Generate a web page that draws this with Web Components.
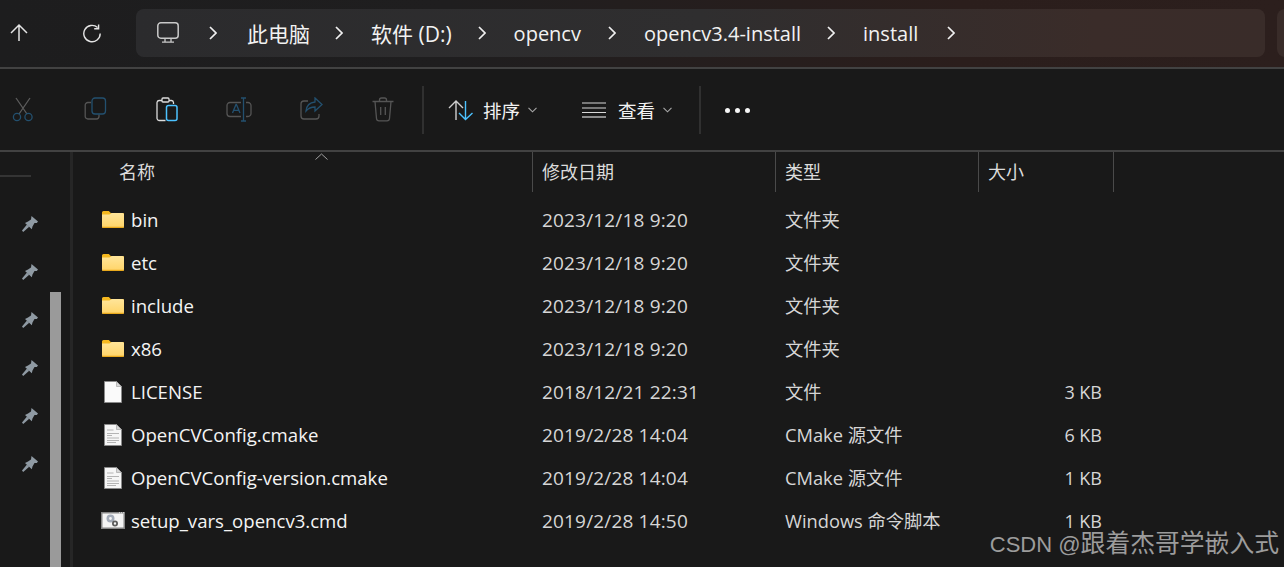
<!DOCTYPE html>
<html>
<head>
<meta charset="utf-8">
<title>install</title>
<style>
  html, body { margin: 0; height: 100%; background: #191919; overflow: hidden; }
  body { font-family: "Open Sans", "Noto Sans CJK SC", sans-serif; color: #fff; }
</style>
</head>
<body>
<fe-window>
  <fe-addressbar></fe-addressbar>
  <fe-toolbar></fe-toolbar>
  <fe-content></fe-content>
</fe-window>
<fe-watermark>CSDN @<span>跟着杰哥学嵌入式</span></fe-watermark>

<script>
const ICONS = {
  up: `<svg width="20" height="20" viewBox="0 0 20 20" fill="none" stroke="#e4e4e4" stroke-width="1.5"><path d="M10 18V2.500M2 10l8-8 8 8"/></svg>`,
  refresh: `<svg width="20" height="20" viewBox="0 0 20 20" fill="none" stroke="#e4e4e4" stroke-width="1.400"><path d="M15.600 4.600A8.200 8.200 0 1 0 18.200 10.500"/><path d="M16.600 1.400v4.400h-4.400"/></svg>`,
  pc: `<svg width="24" height="24" viewBox="0 0 24 24" fill="none" stroke="#c9c9c9" stroke-width="1.500"><rect x="1.800" y="1.800" width="20.400" height="15.400" rx="3"/><path d="M9 17.500v3.400M15 17.500v3.400M6 21.200h12" stroke-width="1.300"/></svg>`,
  chev: `<svg width="8" height="14" viewBox="0 0 8 14" fill="none" stroke="#f0f0f0" stroke-width="1.700"><path d="M1 1l6 6-6 6"/></svg>`,
  cut: `<svg width="22" height="26" viewBox="0 0 22 26" fill="none" stroke-width="1.300"><path d="M4 1l11 16M18 1L7 17" stroke="#5c5c5c"/><circle cx="5" cy="20" r="3.600" stroke="#23506f"/><circle cx="16.500" cy="20" r="3.600" stroke="#23506f"/></svg>`,
  copy: `<svg width="23" height="23" viewBox="0 0 23 23" fill="none" stroke-width="1.300"><path d="M7 5.500H4A2.600 2.600 0 0 0 1.200 8v11.500A2.600 2.600 0 0 0 4 22h8.500A2.600 2.600 0 0 0 15 19.500v-2" stroke="#555"/><rect x="8" y="1" width="13.500" height="16" rx="3" stroke="#23506f"/></svg>`,
  paste: `<svg width="22" height="25" viewBox="0 0 22 25" fill="none" stroke-width="1.300"><path d="M9.500 23.500H3A2.200 2.200 0 0 1 1 21.500V5.500A2.200 2.200 0 0 1 3 3.500h12.500A2.200 2.200 0 0 1 17.500 5.500V7" stroke="#dcdcdc"/><rect x="6" y="1" width="7" height="4" rx="1" stroke="#dcdcdc" fill="#191919"/><rect x="10.500" y="8.500" width="10.500" height="15" rx="2" stroke="#4cc2ff" stroke-width="1.500"/></svg>`,
  rename: `<svg width="26" height="25" viewBox="0 0 26 25" fill="none" stroke-width="1.300"><path d="M15 5.500H4A3 3 0 0 0 1 8.500v8a3 3 0 0 0 3 3h11M20 5.500h2a3 3 0 0 1 3 3v8a3 3 0 0 1-3 3h-2" stroke="#555"/><path d="M6.500 16l3.500-8.500h.4L14 16M7.700 13.300h5" stroke="#23506f"/><path d="M17.500 1v23M15 1h5M15 24h5" stroke="#23506f"/></svg>`,
  share: `<svg width="23" height="23" viewBox="0 0 23 23" fill="none" stroke-width="1.300"><path d="M8 4H4A3 3 0 0 0 1 7v12a3 3 0 0 0 3 3h12a3 3 0 0 0 3-3v-2" stroke="#555"/><path d="M15 1l7 6.500-7 6.500v-4c-4 0-6.500 1-9 4 .5-5 3.500-8.500 9-9z" stroke="#23506f"/></svg>`,
  trash: `<svg width="22" height="25" viewBox="0 0 22 25" fill="none" stroke="#555" stroke-width="1.300"><path d="M.5 4.500h21M7.500 4.500V3A2 2 0 0 1 9.500 1h3a2 2 0 0 1 2 2v1.500M3 4.500l1.500 17a2.500 2.500 0 0 0 2.500 2.300h8a2.500 2.500 0 0 0 2.500-2.300l1.500-17M8.700 10v8M13.300 10v8"/></svg>`,
  sort: `<svg width="26" height="21" viewBox="0 0 26 21" fill="none" stroke-width="1.400"><path d="M8 20V1.500M1 8l7-7 7 7" stroke="#cfcfcf"/><path d="M17.500 1v18.500M11 13l6.500 6.500L24.500 13" stroke="#4cc2ff"/></svg>`,
  view: `<svg width="24" height="16" viewBox="0 0 24 16" fill="none"><path d="M0 1h24M0 6h24M0 10.500h24" stroke="#d8d8d8" stroke-width="1.100"/><path d="M0 15h24" stroke="#9a9a9a" stroke-width="1.800"/></svg>`,
  caret: `<svg width="9" height="6" viewBox="0 0 9 6" fill="none" stroke="#a8a8a8" stroke-width="1.100"><path d="M.5 .8l4 4 4-4"/></svg>`,
  pin: `<svg width="16" height="16" viewBox="0 0 16 16" fill="#8f9aa3"><path d="M9.500 0L16 5.500 14.800 7 12.500 7 10.500 10.500 9.800 13.200 3 7 6 5.400 9 3.600z"/><path d="M5 8.500L0 14.500 1.200 16 7.200 10.800z"/></svg>`,
  folder: `<svg width="22" height="17" viewBox="0 0 22 17"><defs><linearGradient id="fg" x1="0" y1="0" x2="0" y2="1"><stop offset="0" stop-color="#ffe59a"/><stop offset="1" stop-color="#ffd467"/></linearGradient></defs><path d="M0 1.500A1.500 1.500 0 0 1 1.500 0h5.300L9 2.200h13V5H0z" fill="#f5b81f"/><path d="M0 3.500h7.500L9.700 2h10.800A1.500 1.500 0 0 1 22 3.500v12a1.500 1.500 0 0 1-1.500 1.500h-19A1.500 1.500 0 0 1 0 15.500z" fill="url(#fg)"/><path d="M0 15.800h22V15.500A1.500 1.500 0 0 1 20.500 17h-19A1.500 1.500 0 0 1 0 15.500z" fill="#e9a91c"/></svg>`,
  file: `<svg width="18" height="22" viewBox="0 0 18 22"><path d="M.5.500h12l5 5v16H.5z" fill="#fafafa" stroke="#8a8a8a"/><path d="M12.500.500v5h5z" fill="#d6d6d6" stroke="#9a9a9a" stroke-width=".6"/></svg>`,
  doc: `<svg width="18" height="22" viewBox="0 0 18 22"><path d="M.5.500h12l5 5v16H.5z" fill="#f6f6f6" stroke="#8a8a8a"/><path d="M12.500.500v5h5z" fill="#d6d6d6" stroke="#9a9a9a" stroke-width=".6"/><path d="M3 6h6.500M3 9.500h12M3 11.500h5M3 14h12M3 16.500h12M3 18.500h9" stroke="#b4b4b4" stroke-width="1.200"/></svg>`,
  cmd: `<svg width="24" height="17" viewBox="0 0 24 17"><rect x=".75" y=".75" width="22.500" height="15.500" fill="#f4f4f4" stroke="#858585" stroke-width="1.500"/><path d="M18 .8h5" stroke="#e8e8e8" stroke-dasharray="1 1"/><circle cx="9.500" cy="6.500" r="2.700" fill="none" stroke="#a3abb8" stroke-width="2.600"/><circle cx="14" cy="11.500" r="2.100" fill="none" stroke="#5c5c5c" stroke-width="1.800"/></svg>`
};

class FeWindow extends HTMLElement {
  constructor() {
    super();
    this.attachShadow({ mode: "open" }).innerHTML = `
      <style>
        :host { display: flex; flex-direction: column; height: 567px; width: 1284px; overflow: hidden; }
      </style>
      <slot></slot>`;
  }
}

class FeAddressbar extends HTMLElement {
  constructor() {
    super();
    const crumbs = ["此电脑", "软件 (D:)", "opencv", "opencv3.4-install", "install"];
    const items = crumbs.map((c, i) => `<span class="sep">${ICONS.chev}</span><span class="crumb c${i}">${c}</span>`).join("");
    this.attachShadow({ mode: "open" }).innerHTML = `
      <style>
        :host {
          display: flex; flex: none; height: 69px; box-sizing: border-box; padding-top: 9px;
          background: linear-gradient(90deg, #1d1d1e 0%, #1f1e1f 35%, #2b1e1c 75%, #2c1f1d 100%);
          border-bottom: 2px solid #424242;
        }
        .nav { flex: none; width: 136px; display: flex; align-items: center; height: 48px; }
        .nav span { display: flex; }
        .nav span:first-child { margin-left: 9px; }
        .nav span:last-child { margin-left: 53px; }
        .path {
          width: 1129px; height: 48px; flex: none; box-sizing: border-box; padding-left: 20px; border-radius: 8px;
          display: flex; align-items: center;
          background: linear-gradient(90deg, #2b2b2d 0%, #2f2e2f 50%, #3a2c29 85%, #392c29 100%);
          font-size: 20px; color: #f2f2f2; white-space: nowrap;
        }
        .pc { display: flex; margin-right: 29px; }
        .sep { display: flex; }
        .crumb { margin: 0 27px 0 28px; }
        .c0 { margin-left: 30px; margin-right: 25px; font-size: 21px; }
        .c1 { font-size: 21px; margin-right: 26px; }
        .c3 { margin-right: 26px; }
        .c4 { margin-right: 29px; }
        .end { display: flex; }
        .rest {
          flex: none; width: 20px; height: 48px; margin-left: 12px; border-radius: 8px 0 0 8px; background: #392c29;
        }
      </style>
      <div class="nav"><span>${ICONS.up}</span><span>${ICONS.refresh}</span></div>
      <div class="path"><span class="pc">${ICONS.pc}</span>${items}<span class="end">${ICONS.chev}</span></div>
      <div class="rest"></div>`;
  }
}

class FeToolbar extends HTMLElement {
  constructor() {
    super();
    const btns = ["cut", "copy", "paste", "rename", "share", "trash"]
      .map((n) => `<span class="ic">${ICONS[n]}</span>`).join("");
    this.attachShadow({ mode: "open" }).innerHTML = `
      <style>
        :host {
          display: flex; flex: none; height: 83px; box-sizing: border-box; align-items: center;
          background: #191919; border-bottom: 2px solid #424242; padding-top: 1px;
          font-size: 18.500px; color: #f2f2f2;
        }
        .ic { display: flex; justify-content: center; width: 72px; flex: none; }
        .icons { display: flex; margin-left: -13px; width: 435px; flex: none; }
        .div { width: 2px; height: 48px; background: #303030; flex: none; }
        .menu { display: flex; align-items: center; flex: none; }
        .menu svg { display: block; }
        .label { margin-left: 9px; margin-right: 8px; }
        .sort { margin-left: 24px; }
        .view { margin-left: 45px; }
        .more { margin-left: 24px; display: flex; gap: 5px; }
        .more i { display: block; width: 5px; height: 5px; border-radius: 50%; background: #f5f5f5; }
      </style>
      <div class="icons">${btns}</div>
      <div class="div"></div>
      <div class="menu sort">${ICONS.sort}<span class="label">排序</span>${ICONS.caret}</div>
      <div class="menu view">${ICONS.view}<span class="label" style="margin-left:12px">查看</span>${ICONS.caret}</div>
      <div class="div" style="margin-left:27px"></div>
      <div class="more"><i></i><i></i><i></i></div>`;
  }
}

class FeContent extends HTMLElement {
  constructor() {
    super();
    this.attachShadow({ mode: "open" }).innerHTML = `
      <style>
        :host { display: flex; flex: 1; min-height: 0; background: #191919; }
        .right { flex: 1; min-width: 0; display: flex; flex-direction: column; }
      </style>
      <fe-navpane></fe-navpane>
      <div class="right">
        <fe-header></fe-header>
        <fe-row icon="folder" name="bin" date="2023/12/18 9:20" kind="文件夹"></fe-row>
        <fe-row icon="folder" name="etc" date="2023/12/18 9:20" kind="文件夹"></fe-row>
        <fe-row icon="folder" name="include" date="2023/12/18 9:20" kind="文件夹"></fe-row>
        <fe-row icon="folder" name="x86" date="2023/12/18 9:20" kind="文件夹"></fe-row>
        <fe-row icon="file" name="LICENSE" date="2018/12/21 22:31" kind="文件" size="3 KB"></fe-row>
        <fe-row icon="doc" name="OpenCVConfig.cmake" date="2019/2/28 14:04" kind="CMake 源文件" size="6 KB"></fe-row>
        <fe-row icon="doc" name="OpenCVConfig-version.cmake" date="2019/2/28 14:04" kind="CMake 源文件" size="1 KB"></fe-row>
        <fe-row icon="cmd" name="setup_vars_opencv3.cmd" date="2019/2/28 14:50" kind="Windows 命令脚本" size="1 KB"></fe-row>
      </div>`;
  }
}

class FeNavpane extends HTMLElement {
  constructor() {
    super();
    const pins = Array.from({ length: 6 }, () => `<span>${ICONS.pin}</span>`).join("");
    this.attachShadow({ mode: "open" }).innerHTML = `
      <style>
        :host {
          display: flex; flex: none; width: 73px; box-sizing: border-box; position: relative;
          border-right: 3px solid #262626;
        }
        .col { width: 50px; flex: none; }
        .rule { width: 31px; height: 2px; background: #343434; margin-top: 23px; }
        .pins { display: flex; flex-direction: column; gap: 32px; margin: 39px 0 0 22px; }
        .pins span { display: flex; height: 16px; }
        .bar { width: 11px; background: #9a9a9a; margin-top: 140px; flex: none; }
      </style>
      <div class="col"><div class="rule"></div><div class="pins">${pins}</div></div>
      <div class="bar"></div>`;
  }
}

class FeHeader extends HTMLElement {
  constructor() {
    super();
    this.attachShadow({ mode: "open" }).innerHTML = `
      <style>
        :host { display: block; flex: none; height: 46px; position: relative; font-size: 18px; color: #dcdcdc; }
        .cols { display: grid; grid-template-columns: 460px 243px 203px 135px; height: 40px; }
        .cols div { padding-left: 9px; border-right: 1px solid #4a4a4a; line-height: 40px; box-sizing: border-box; }
        .cols div:first-child { padding-left: 46px; }
        .sort { position: absolute; left: 242px; top: 1px; display: block; }
      </style>
      <div class="cols"><div>名称</div><div>修改日期</div><div>类型</div><div>大小</div></div>
      <svg class="sort" width="13" height="7" viewBox="0 0 13 7" fill="none" stroke="#a0a0a0"><path d="M.5 6.500l6-5.500 6 5.500"/></svg>`;
  }
}

class FeRow extends HTMLElement {
  constructor() {
    super();
    const a = (k) => this.getAttribute(k) || "";
    this.attachShadow({ mode: "open" }).innerHTML = `
      <style>
        :host {
          display: grid; grid-template-columns: 460px 243px 203px 123px; flex: none; height: 43px; align-items: center;
          font-size: 18.600px; color: #f4f4f4; white-space: nowrap;
        }
        .name { display: flex; align-items: center; padding-left: 28px; }
        .ico { width: 24px; display: flex; justify-content: center; margin-right: 6px; flex: none; }
        .date, .kind { padding-left: 9px; color: #d6d6d6; }
        .date { font-size: 19px; letter-spacing: .17px; }
        .kind { font-size: 18.300px; margin-top: -2px; }
        .size { text-align: right; color: #d6d6d6; font-size: 18px; }
      </style>
      <div class="name"><span class="ico">${ICONS[a("icon")]}</span>${a("name")}</div>
      <div class="date">${a("date")}</div>
      <div class="kind">${a("kind")}</div>
      <div class="size">${a("size")}</div>`;
  }
}

class FeWatermark extends HTMLElement {
  constructor() {
    super();
    this.attachShadow({ mode: "open" }).innerHTML = `
      <style>
        :host {
          position: absolute; right: 5px; bottom: 6px; font-size: 22px; line-height: 32px; color: #9c9c9c;
          font-family: "Liberation Sans", "Noto Sans CJK SC", sans-serif; white-space: nowrap;
        }
        ::slotted(span) { font-size: 24.800px; }
      </style>
      <slot></slot>`;
  }
}

customElements.define("fe-window", FeWindow);
customElements.define("fe-addressbar", FeAddressbar);
customElements.define("fe-toolbar", FeToolbar);
customElements.define("fe-content", FeContent);
customElements.define("fe-navpane", FeNavpane);
customElements.define("fe-header", FeHeader);
customElements.define("fe-row", FeRow);
customElements.define("fe-watermark", FeWatermark);
</script>
</body>
</html>
